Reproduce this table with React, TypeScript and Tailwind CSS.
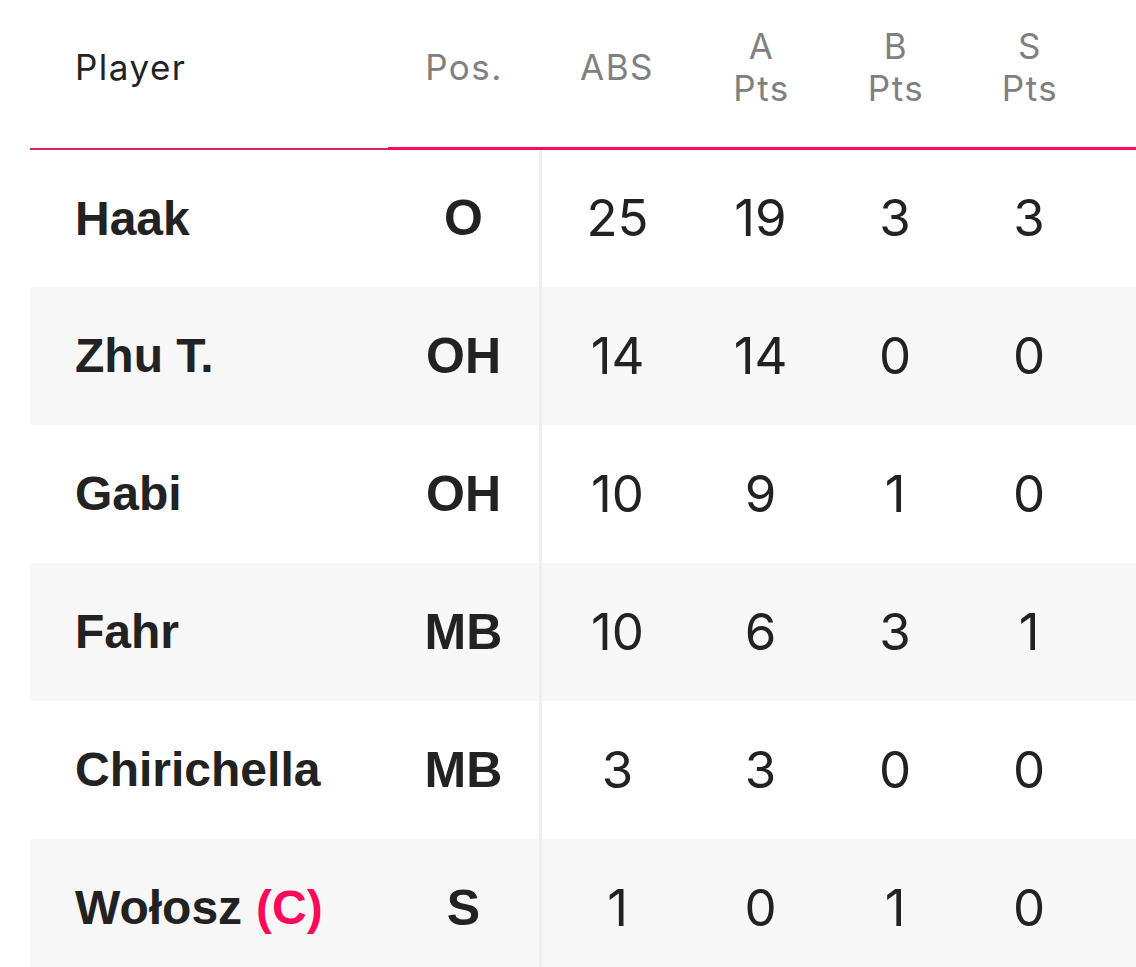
const rows = [
  { name: "Haak", pos: "O", abs: 25, a: 19, b: 3, s: 3 },
  { name: "Zhu T.", pos: "OH", abs: 14, a: 14, b: 0, s: 0 },
  { name: "Gabi", pos: "OH", abs: 10, a: 9, b: 1, s: 0 },
  { name: "Fahr", pos: "MB", abs: 10, a: 6, b: 3, s: 1 },
  { name: "Chirichella", pos: "MB", abs: 3, a: 3, b: 0, s: 0 },
  { name: "Wołosz", captain: true, pos: "S", abs: 1, a: 0, b: 1, s: 0 },
];

const num = "font-['Inter',sans-serif] text-[51px] font-normal text-[#222]";
const head = "font-['Inter',sans-serif] text-[35px] leading-[42px] tracking-[1.5px] text-[#808080]";

export default function App() {
  return (
    <div className="w-[1136px] h-[967px] overflow-hidden bg-white pl-[30px]">
      {/* header */}
      <div className="flex h-[150px]">
        <div className="w-[358px] flex items-center pl-[45px] pb-[14px] border-b-2 border-[#dc1f5e]">
          <span className="font-['Inter',sans-serif] text-[35px] tracking-[1.5px] text-[#222]">Player</span>
        </div>
        <div className="flex flex-1 items-center pb-[13px] border-b-[3px] border-[#fa0a5a]">
          <div className={`w-[152px] text-center ${head}`}>Pos.</div>
          <div className={`w-[154px] text-center ${head}`}>ABS</div>
          <div className={`w-[135px] text-center ${head}`}>A<br />Pts</div>
          <div className={`w-[134px] text-center ${head}`}>B<br />Pts</div>
          <div className={`w-[134px] text-center ${head}`}>S<br />Pts</div>
        </div>
      </div>

      {/* body */}
      {rows.map((r, i) => (
        <div key={r.name} className={`flex ${i === 0 ? "h-[137px]" : "h-[138px]"} ${i % 2 ? "bg-[#f7f7f7]" : "bg-white"}`}>
          <div className="w-[358px] flex items-center pl-[45px] font-['Liberation_Sans',Arial,sans-serif] text-[48px] font-bold text-[#222]">
            {r.name}
            {r.captain && <span className="ml-[14px] text-[#fa0a5a]">(C)</span>}
          </div>
          <div className="w-[154px] flex items-center justify-center border-r-[3px] border-[#eeeeee] font-['Liberation_Sans',Arial,sans-serif] text-[50px] font-bold text-[#222]">
            {r.pos}
          </div>
          <div className={`w-[151px] flex items-center justify-center ${num}`}>{r.abs}</div>
          <div className={`w-[135px] flex items-center justify-center ${num}`}>{r.a}</div>
          <div className={`w-[134px] flex items-center justify-center ${num}`}>{r.b}</div>
          <div className={`w-[134px] flex items-center justify-center ${num}`}>{r.s}</div>
        </div>
      ))}
    </div>
  );
}
